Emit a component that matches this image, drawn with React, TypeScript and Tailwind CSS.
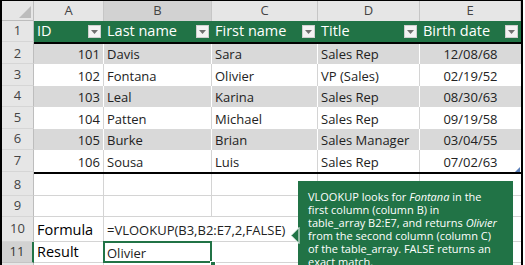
import React from "react";

const COLW = ["w-[70px]", "w-[108px]", "w-[106px]", "w-[102px]", "w-[101px]"];

const DATA: string[][] = [
  ["101", "Davis", "Sara", "Sales Rep", "12/08/68"],
  ["102", "Fontana", "Olivier", "VP (Sales)", "02/19/52"],
  ["103", "Leal", "Karina", "Sales Rep", "08/30/63"],
  ["104", "Patten", "Michael", "Sales Rep", "09/19/58"],
  ["105", "Burke", "Brian", "Sales Manager", "03/04/55"],
  ["106", "Sousa", "Luis", "Sales Rep", "07/02/63"],
];
const DATA_H = ["h-[20px]", "h-[22px]", "h-[21px]", "h-[22px]", "h-[21px]", "h-[22px]"];

function RowHead({ label }: { label: string }) {
  return (
    <div className="w-[32px] shrink-0 flex items-center justify-center border-r border-b border-r-[#bdbdbd] border-b-[#d6d6d6] bg-[#e6e6e6] text-[13px] text-[#444]">
      {label}
    </div>
  );
}

function RowHeadSel({ label }: { label: string }) {
  return (
    <div className="w-[32px] shrink-0 flex items-center justify-center border-r-2 border-b border-r-[#217346] border-b-[#c4c4c4] bg-[#d2d2d2] text-[13px] text-[#333]">
      {label}
    </div>
  );
}

function Drop() {
  return (
    <div className="w-[13px] h-[13px] shrink-0 bg-[#f3f3f3] border border-[#cfcfcf] flex items-center justify-center">
      <svg width="7" height="4" viewBox="0 0 7 4">
        <path d="M0 0h7L3.5 4z" fill="#707070" />
      </svg>
    </div>
  );
}

function Thick() {
  return (
    <div className="flex h-[2px] shrink-0">
      <div className="w-[32px] shrink-0 bg-[#e6e6e6] border-r border-[#bdbdbd]" />
      <div className="flex-1 bg-black" />
    </div>
  );
}

export default function App() {
  const headers = ["ID", "Last name", "First name", "Title", "Birth date"];
  return (
    <div className="w-[525px] h-[265px] overflow-hidden bg-white font-['Open_Sans',sans-serif]">
      <div className="relative w-[523px] h-[290px] border-l-2 border-t border-r-2 border-black flex flex-col">
        {/* column header */}
        <div className="flex h-[20px] shrink-0">
          <div className="w-[32px] shrink-0 bg-[#e6e6e6] border-r border-b border-[#bdbdbd] flex items-end justify-end pr-[2px] pb-[2px]">
            <svg width="12" height="12" viewBox="0 0 12 12">
              <path d="M12 0V12H0z" fill="#bcbcbc" />
            </svg>
          </div>
          {["A", "B", "C", "D", "E"].map((l, i) => (
            <div
              key={l}
              className={`${COLW[i]} shrink-0 flex items-center justify-center text-[13px] text-[#444] border-r border-[#c6c6c6] ${
                i === 1 ? "bg-[#d2d2d2]" : "bg-[#e6e6e6]"
              }`}
            >
              {l}
            </div>
          ))}
        </div>

        {/* row 1 - table header */}
        <div className="flex h-[21px] shrink-0">
          <RowHead label="1" />
          {headers.map((h, i) => (
            <div
              key={h}
              className={`${COLW[i]} shrink-0 bg-[#217346] flex items-center justify-between pl-[3px] pr-[3px] text-white text-[14.5px] leading-none`}
            >
              <span className="whitespace-nowrap">{h}</span>
              <Drop />
            </div>
          ))}
        </div>
        <Thick />

        {/* data rows */}
        {DATA.map((r, ri) => {
          const gray = ri % 2 === 0;
          return (
            <div key={ri} className={`flex ${DATA_H[ri]} shrink-0`}>
              <RowHead label={String(ri + 2)} />
              {r.map((v, ci) => (
                <div
                  key={ci}
                  className={`${COLW[ci]} shrink-0 relative flex items-end pb-[1px] text-[13px] leading-[17px] text-[#222] whitespace-nowrap ${
                    gray ? "bg-[#d9d9d9]" : "bg-white"
                  } ${ci < 4 ? (gray ? "border-r border-white" : "border-r border-[#d4d4d4]") : ""} ${
                    ci === 0 ? "justify-end pr-[3px]" : ci === 4 ? "justify-center" : "pl-[3px]"
                  }`}
                >
                  {v}
                  {ri === 5 && ci === 4 && (
                    <svg className="absolute right-[1px] bottom-0" width="5" height="5" viewBox="0 0 5 5">
                      <path d="M5 0V5H0z" fill="#5a7fb8" />
                    </svg>
                  )}
                </div>
              ))}
            </div>
          );
        })}
        <Thick />

        {/* rows 8, 9 */}
        {["8", "9"].map((n, k) => (
          <div key={n} className={`flex ${k === 0 ? "h-[22px]" : "h-[21px]"} shrink-0`}>
            <RowHead label={n} />
            {COLW.map((w, i) => (
              <div key={i} className={`${w} shrink-0 border-b border-[#d4d4d4] ${i < 4 ? "border-r" : ""}`} />
            ))}
          </div>
        ))}

        {/* row 10 */}
        <div className="flex h-[25px] shrink-0">
          <RowHead label="10" />
          <div className="w-[70px] shrink-0 border-r border-b border-[#d4d4d4] flex items-end pl-[3px] pb-[2px] text-[14.5px] leading-[18px] font-medium text-black">
            Formula
          </div>
          <div className="w-[108px] shrink-0 border-b border-[#d4d4d4] flex items-end pl-[3px] pb-[2px] text-[13px] leading-[18px] text-[#222] whitespace-nowrap overflow-visible">
            =VLOOKUP(B3,B2:E7,2,FALSE)
          </div>
          <div className="w-[106px] shrink-0 border-b border-[#d4d4d4]" />
          <div className="w-[102px] shrink-0 border-r border-b border-[#d4d4d4]" />
          <div className="w-[101px] shrink-0 border-b border-[#d4d4d4]" />
        </div>

        {/* row 11 */}
        <div className="flex h-[21px] shrink-0">
          <RowHeadSel label="11" />
          <div className="w-[70px] shrink-0 border-r border-b border-[#d4d4d4] flex items-end pl-[3px] pb-[1px] text-[14.5px] leading-[18px] font-medium text-black">
            Result
          </div>
          <div className="w-[108px] shrink-0 relative flex items-end pl-[3px] pb-[1px] text-[13px] leading-[18px] text-[#222]">
            Olivier
            <div className="absolute -left-[1px] -top-[1px] w-[109px] h-[22px] border-2 border-[#217346]" />
            <div className="absolute -right-[4px] -bottom-[4px] w-[6px] h-[6px] bg-[#217346] border border-white" />
          </div>
          <div className="w-[106px] shrink-0 border-r border-b border-[#d4d4d4]" />
          <div className="w-[102px] shrink-0 border-r border-b border-[#d4d4d4]" />
          <div className="w-[101px] shrink-0 border-b border-[#d4d4d4]" />
        </div>

        {/* row 12 */}
        <div className="flex h-[22px] shrink-0">
          <div className="w-[32px] shrink-0 border-r border-b border-r-[#bdbdbd] border-b-[#d6d6d6] bg-[#e6e6e6]" />
          {COLW.map((w, i) => (
            <div key={i} className={`${w} shrink-0 border-b border-[#d4d4d4] ${i < 4 ? "border-r" : ""}`} />
          ))}
        </div>

        {/* tooltip callout */}
        <div className="absolute left-[296px] top-[180px] w-[215px] h-[100px] bg-[#217346] pl-[10px] pt-[9px] text-white text-[11px] leading-[13px] whitespace-nowrap">
          <div>
            VLOOKUP looks for <i>Fontana</i> in the
          </div>
          <div>first column (column B) in</div>
          <div>
            table_array B2:E7, and returns <i>Olivier</i>
          </div>
          <div>from the second column (column C)</div>
          <div>of the table_array. FALSE returns an</div>
          <div>exact match.</div>
        </div>
        <svg className="absolute left-[288px] top-[226px]" width="10" height="17" viewBox="0 0 10 17">
          <path d="M9 0.5L1 8.5L9 16.5z" fill="#217346" stroke="#ffffff" strokeWidth="1" />
        </svg>
      </div>
    </div>
  );
}
